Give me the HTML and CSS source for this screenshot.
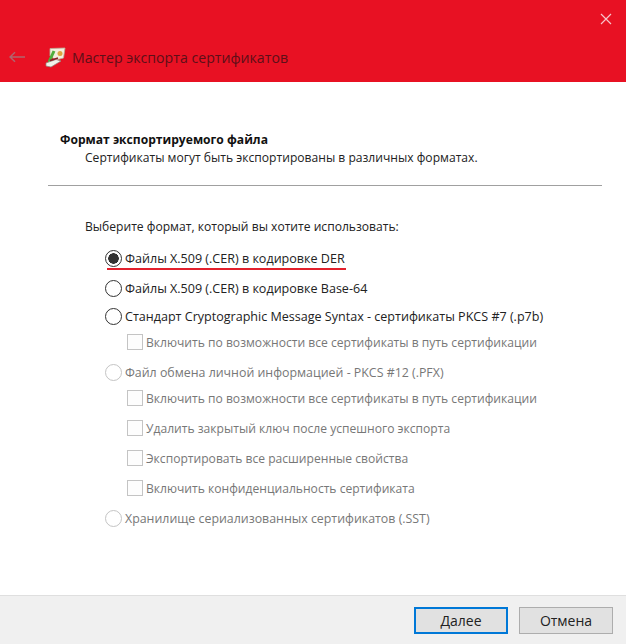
FILE: index.html
```html
<!DOCTYPE html>
<html lang="ru">
<head>
    <meta charset="UTF-8">
    <meta name="viewport" content="width=device-width, initial-scale=1.0">
    <title>Мастер экспорта сертификатов</title>
    <link rel="stylesheet" href="styles.css">
</head>
<body>
    <div class="wizard">
        <header class="title-bar">
            <svg class="close-icon" width="12" height="12" viewBox="0 0 12 12">
                <path d="M1 1L11 11M11 1L1 11" stroke="#f7c3c9" stroke-width="1.2" fill="none"/>
            </svg>
            <div class="title-row">
                <svg class="back-icon" width="16" height="12" viewBox="0 0 16 12">
                    <path d="M1 6H16M6 1.200L1 6L6 10.800" stroke="#b0656e" stroke-width="1.500" fill="none"/>
                </svg>
                <svg class="wizard-icon" width="21" height="21" viewBox="0 0 21 21">
                    <path d="M5 1.500L20 1L18.500 11L11 13L5 9Z" fill="#f4eedd" stroke="#b9ad95" stroke-width="0.800"/>
                    <circle cx="15" cy="6.500" r="2.500" fill="#dca53f"/>
                    <path d="M9 4L4 15" stroke="#4fae3c" stroke-width="3"/>
                    <path d="M1 16L11 12.500L16 14L6 20L1 19Z" fill="#f1f1ea" stroke="#8d8d80" stroke-width="0.700"/>
                    <path d="M5 13.500L13 11" stroke="#8a1d26" stroke-width="1.500"/>
                </svg>
                <span class="title-text">Мастер экспорта сертификатов</span>
            </div>
        </header>

        <main class="content">
            <h1 class="page-title">Формат экспортируемого файла</h1>
            <p class="page-desc">Сертификаты могут быть экспортированы в различных форматах.</p>
            <hr class="divider">

            <p class="prompt">Выберите формат, который вы хотите использовать:</p>

            <div class="options">
                <div class="option marked">
                    <span class="radio checked"></span>
                    <span class="label">Файлы X.509 (.CER) в кодировке DER</span>
                </div>
                <div class="option gap-30">
                    <span class="radio"></span>
                    <span class="label">Файлы X.509 (.CER) в кодировке Base-64</span>
                </div>
                <div class="option gap-28">
                    <span class="radio"></span>
                    <span class="label">Стандарт Cryptographic Message Syntax - сертификаты PKCS #7 (.p7b)</span>
                </div>
                <div class="option sub disabled gap-26">
                    <span class="check"></span>
                    <span>Включить по возможности все сертификаты в путь сертификации</span>
                </div>
                <div class="option disabled gap-30">
                    <span class="radio"></span>
                    <span class="label">Файл обмена личной информацией - PKCS #12 (.PFX)</span>
                </div>
                <div class="option sub disabled gap-26">
                    <span class="check"></span>
                    <span>Включить по возможности все сертификаты в путь сертификации</span>
                </div>
                <div class="option sub disabled gap-30">
                    <span class="check"></span>
                    <span>Удалить закрытый ключ после успешного экспорта</span>
                </div>
                <div class="option sub disabled gap-30">
                    <span class="check"></span>
                    <span>Экспортировать все расширенные свойства</span>
                </div>
                <div class="option sub disabled gap-30">
                    <span class="check"></span>
                    <span>Включить конфиденциальность сертификата</span>
                </div>
                <div class="option disabled gap-30">
                    <span class="radio"></span>
                    <span class="label">Хранилище сериализованных сертификатов (.SST)</span>
                </div>
            </div>
        </main>

        <footer class="footer">
            <button class="btn btn-default" type="button">Далее</button>
            <button class="btn" type="button">Отмена</button>
        </footer>
    </div>
</body>
</html>
```

FILE: styles.css
```css
* {
    box-sizing: border-box;
}
body {
    margin: 0;
    font-family: "Open Sans", "Noto Sans", sans-serif;
    font-size: 12.1px;
    color: #222;
    background-color: #fff;
}
.wizard {
    width: 626px;
    height: 644px;
    display: flex;
    flex-direction: column;
}
.title-bar {
    height: 82px;
    flex: none;
    background-color: #e81123;
    display: flex;
    flex-direction: column;
    padding: 13px 14px 0 9px;
}
.close-icon {
    align-self: flex-end;
}
.title-row {
    display: flex;
    align-items: center;
    margin-top: 20px;
    height: 24px;
}
.back-icon {
    margin-right: 20px;
}
.wizard-icon {
    margin-right: 6px;
}
.title-text {
    font-size: 14.15px;
    color: #5d0f18;
}
.content {
    flex: 1;
    padding: 49px 24px 0 48px;
}
.page-title {
    margin: 0 0 0 12px;
    font-size: 12.1px;
    line-height: 18px;
    font-weight: 700;
    color: #111;
}
.page-desc {
    margin: 0 0 0 37px;
    line-height: 18px;
}
.divider {
    margin: 18px 0 0;
    border: none;
    border-top: 1px solid #a0a0a0;
}
.prompt {
    margin: 32px 0 0 37px;
    line-height: 18px;
}
.options {
    margin-top: 10px;
    padding-left: 57px;
}
.option {
    height: 24px;
    display: flex;
    align-items: center;
    gap: 3px;
}
.gap-26 {
    margin-top: 2px;
}
.gap-28 {
    margin-top: 4px;
}
.gap-30 {
    margin-top: 6px;
}
.option.sub {
    padding-left: 22px;
    gap: 3px;
}
.option.disabled {
    color: #777;
}
.label {
    font-size: 12.55px;
}
.disabled .label {
    font-size: 12.38px;
}
.radio {
    width: 17px;
    height: 17px;
    flex: none;
    border: 1px solid #333;
    border-radius: 50%;
    background-color: #fff;
}
.radio.checked {
    background: radial-gradient(circle, #333 0 5px, #fff 5.500px);
}
.disabled .radio {
    border-color: #c4c4c4;
}
.check {
    width: 16px;
    height: 16px;
    flex: none;
    border: 1px solid #c4c4c4;
    background-color: #fdfdfd;
}
.marked {
    position: relative;
}
/* red pen line under the chosen option */
.marked::after {
    content: "";
    position: absolute;
    left: 2px;
    top: 22px;
    width: 239px;
    height: 2px;
    background-color: #e2202c;
}
.footer {
    height: 49px;
    flex: none;
    background-color: #f0f0f0;
    border-top: 1px solid #dfdfdf;
    display: flex;
    justify-content: flex-end;
    align-items: flex-start;
    gap: 11px;
    padding: 11px 13px 0 0;
}
.btn {
    width: 94px;
    height: 27px;
    padding: 0;
    font-family: inherit;
    font-size: 14px;
    color: #222;
    background-color: #e1e1e1;
    border: 1px solid #adadad;
}
.btn-default {
    border: 2px solid #0078d7;
}
```
